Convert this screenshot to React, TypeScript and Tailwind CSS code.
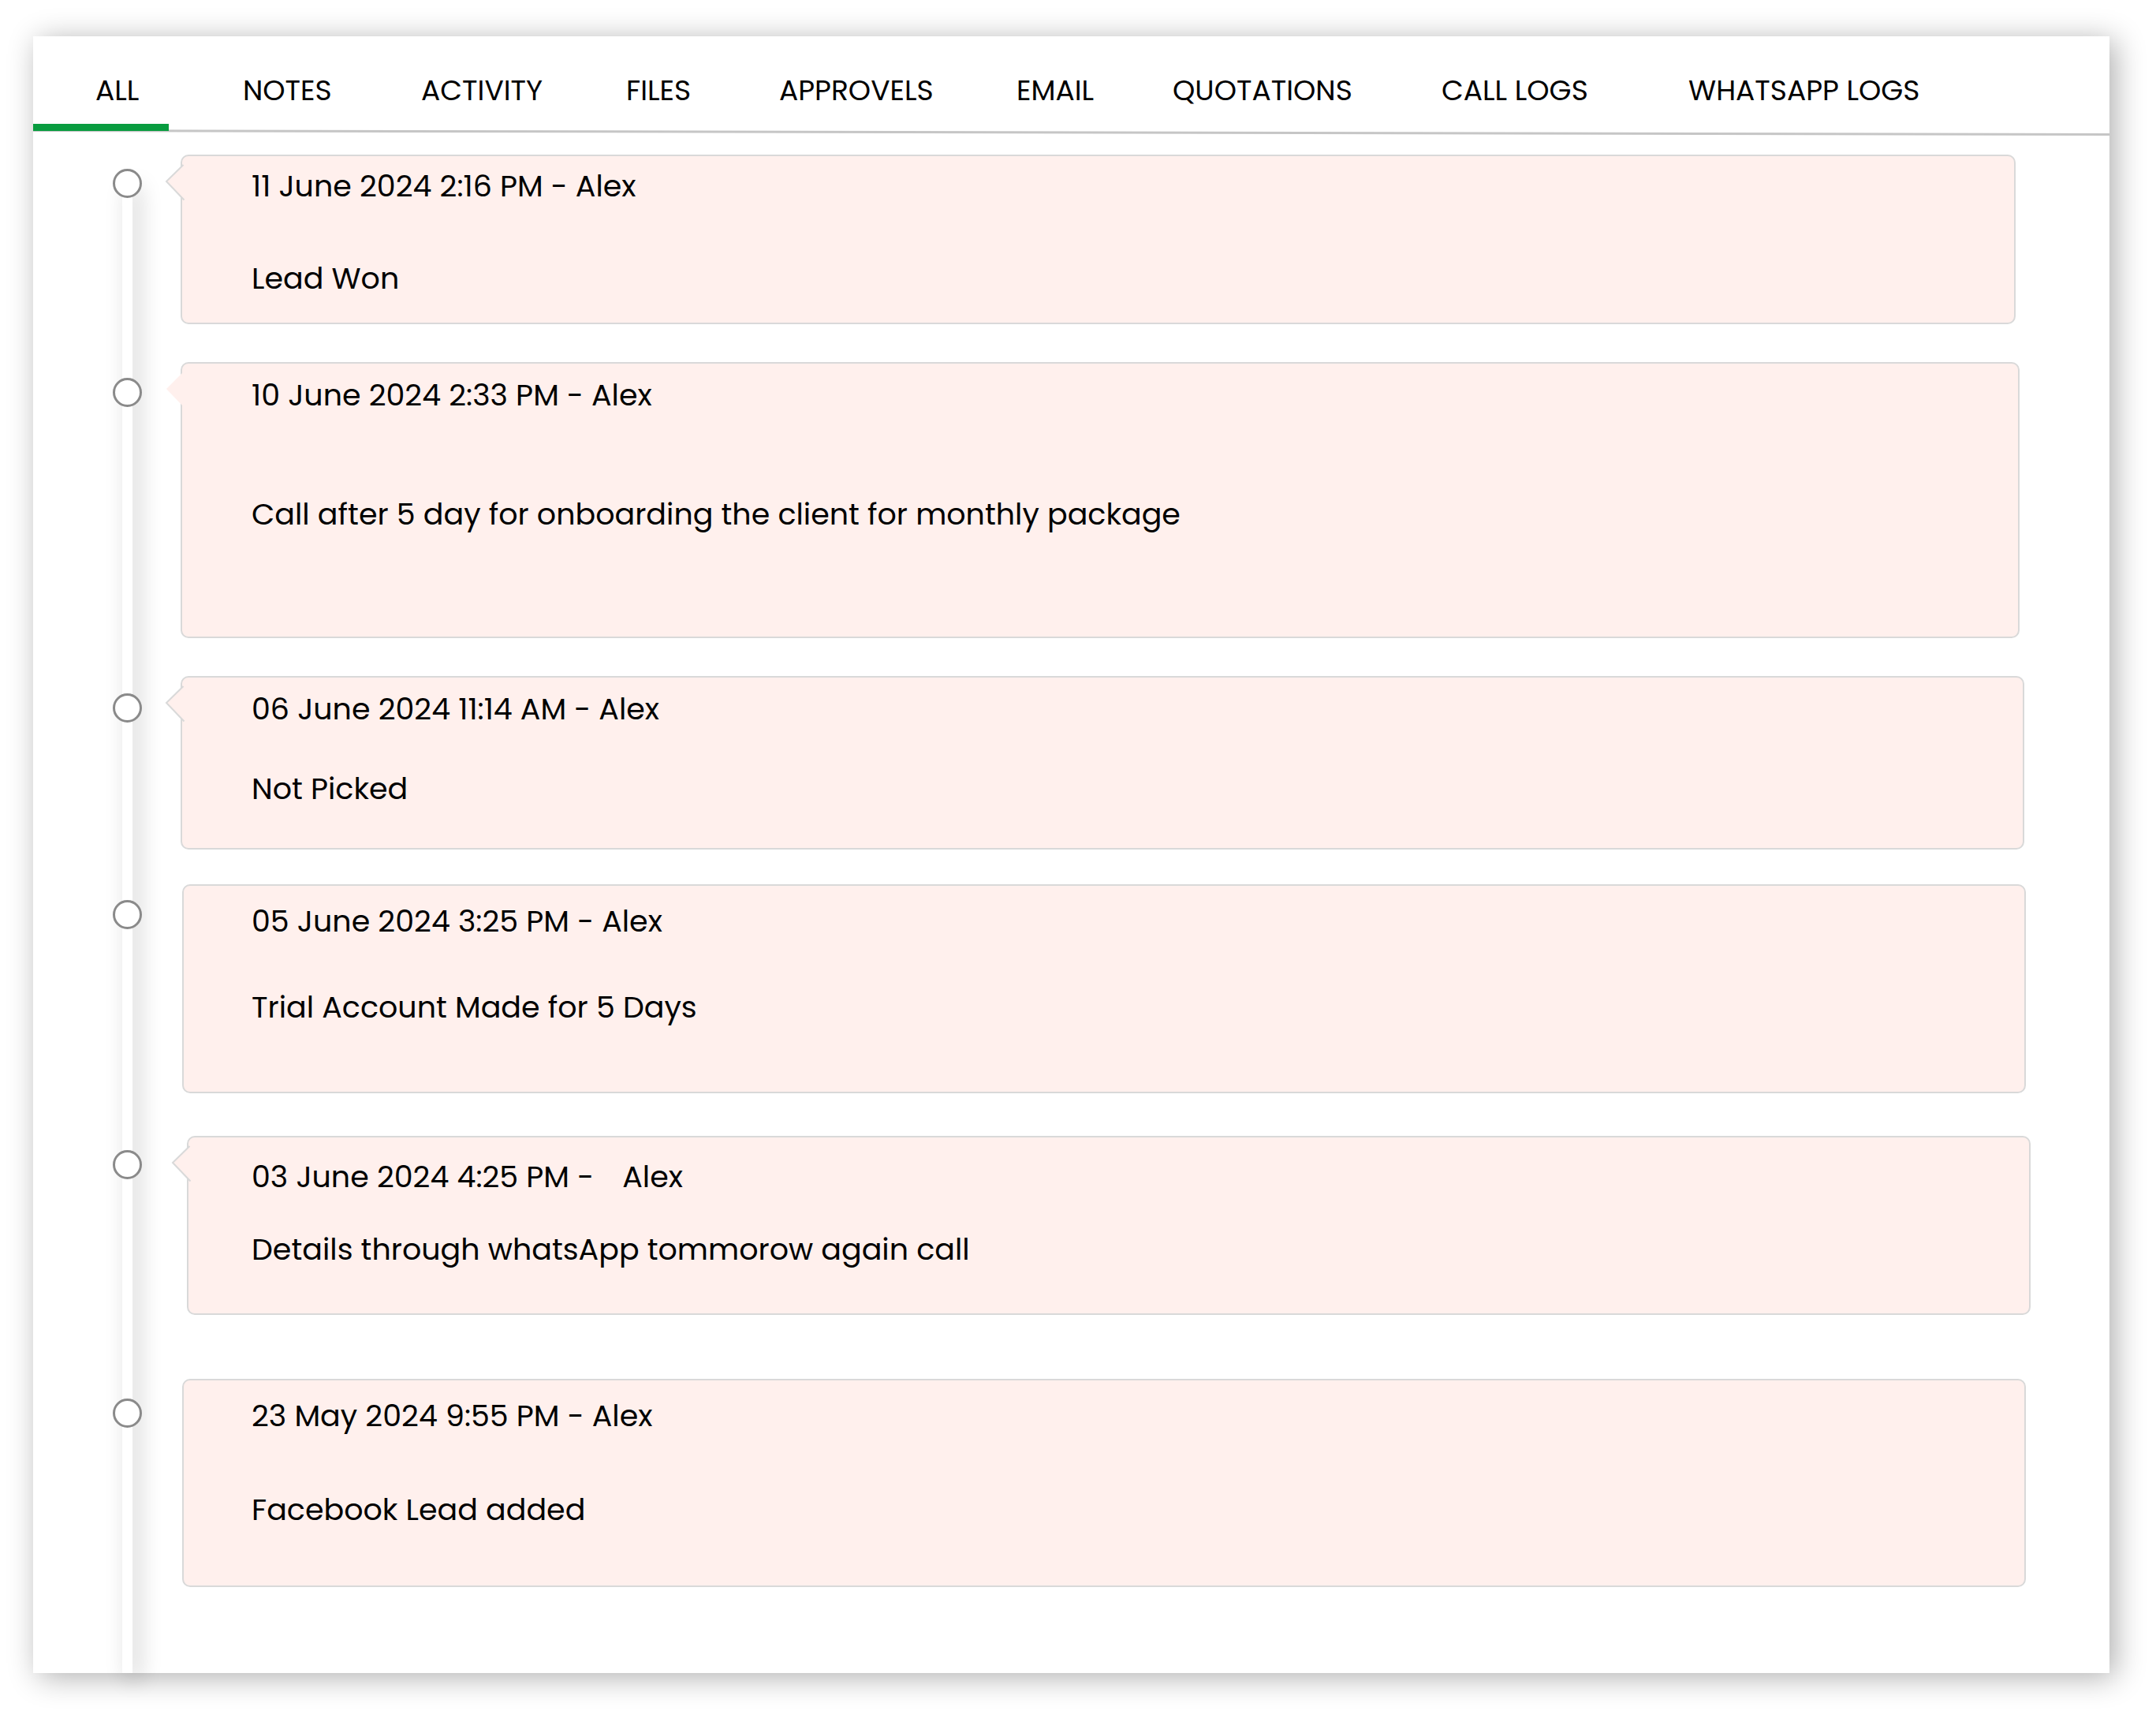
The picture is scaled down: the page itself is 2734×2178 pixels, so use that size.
import { useState } from "react";
import clsx from "clsx";

interface Entry {
  date: string;
  author: string;
  note: string;
  arrow?: "outlined" | "plain";
  authorGap?: string;
  dotClass: string;
  rowClass: string;
  cardClass: string;
}

const TABS = [
  "ALL",
  "NOTES",
  "ACTIVITY",
  "FILES",
  "APPROVELS",
  "EMAIL",
  "QUOTATIONS",
  "CALL LOGS",
  "WHATSAPP LOGS",
];

const ENTRIES: Entry[] = [
  {
    date: "11 June 2024 2:16 PM",
    author: "Alex",
    note: "Lead Won",
    arrow: "outlined",
    dotClass: "top-[18px]",
    rowClass: "mb-12 pr-[119px] pl-[187px]",
    cardClass: "gap-[77px] pt-[18px] pb-9 pl-[88px]",
  },
  {
    date: "10 June 2024 2:33 PM",
    author: "Alex",
    note: "Call after 5 day for onboarding the client for monthly package",
    arrow: "plain",
    dotClass: "top-5",
    rowClass: "mb-12 pr-[114px] pl-[187px]",
    cardClass: "gap-[111px] pt-5 pb-[135px] pl-[88px]",
  },
  {
    date: "06 June 2024 11:14 AM",
    author: "Alex",
    note: "Not Picked",
    arrow: "outlined",
    dotClass: "top-[22px]",
    rowClass: "mb-11 pr-[108px] pl-[187px]",
    cardClass: "gap-[61px] pt-5 pb-[55px] pl-[88px]",
  },
  {
    date: "05 June 2024 3:25 PM",
    author: "Alex",
    note: "Trial Account Made for 5 Days",
    dotClass: "top-5",
    rowClass: "mb-[54px] pr-[106px] pl-[189px]",
    cardClass: "gap-[69px] pt-[25px] pb-[87px] pl-[86px]",
  },
  {
    date: "03 June 2024 4:25 PM",
    author: "Alex",
    note: "Details through whatsApp tommorow again call",
    arrow: "outlined",
    authorGap: "gap-9",
    dotClass: "top-[18px]",
    rowClass: "mb-[81px] pr-[100px] pl-[195px]",
    cardClass: "gap-[52px] pt-[30px] pb-[61px] pl-20",
  },
  {
    date: "23 May 2024 9:55 PM",
    author: "Alex",
    note: "Facebook Lead added",
    dotClass: "top-[25px]",
    rowClass: "pr-[106px] pl-[189px]",
    cardClass: "gap-[79px] pt-[25px] pb-[76px] pl-[86px]",
  },
];

const Arrow = ({ outlined }: { outlined: boolean }) => (
  <svg
    className="absolute top-2.5 -left-[22px] h-12 w-[26px]"
    viewBox="0 0 26 48"
    fill="none"
    aria-hidden="true"
  >
    <path d="M26 1 L23 1 L2 22 L24 45 L26 45 Z" fill="#fff0ed" />
    {outlined && (
      <path d="M23.500 1 L2 22 L24.500 45.500" stroke="#d9d9d9" strokeWidth="2" />
    )}
  </svg>
);

const TimelineEntry = ({ entry }: { entry: Entry }) => (
  <li className={clsx("relative", entry.rowClass)}>
    <span
      className={clsx(
        "absolute left-[101px] size-[37px] rounded-full border-3 border-[#8a8a8a] bg-white",
        entry.dotClass
      )}
    />
    <article
      className={clsx(
        "relative flex flex-col rounded-[10px] border-2 border-[#d9d9d9] bg-[#fff0ed]",
        entry.cardClass
      )}
    >
      {entry.arrow && <Arrow outlined={entry.arrow === "outlined"} />}
      <h2 className={clsx("flex", entry.authorGap ?? "gap-2.5")}>
        <time>{entry.date} -</time>
        <span>{entry.author}</span>
      </h2>
      <p>{entry.note}</p>
    </article>
  </li>
);

export default function App() {
  const [active, setActive] = useState("ALL");

  return (
    <main className="min-h-screen bg-white px-[42px] pt-[46px] pr-[59px] pb-14 font-['Poppins','Inter',sans-serif] text-[38px] leading-10 text-black">
      <section className="bg-white shadow-[7px_5px_36px_rgba(0,0,0,0.32)]">
        <nav className="relative grid h-[126px] grid-cols-[266fr_226fr_260fr_194fr_301fr_198fr_341fr_313fr_534fr] text-[36px]">
          {TABS.map((tab) => (
            <button
              key={tab}
              type="button"
              onClick={() => setActive(tab)}
              className="relative cursor-pointer pt-3 text-left whitespace-nowrap first:pl-[79px]"
            >
              {tab}
              {active === tab && (
                <span className="absolute bottom-1.5 left-0 z-10 h-[9px] w-[172px] bg-[#089c3f]" />
              )}
            </button>
          ))}
          {/* divider drops slightly towards the right edge */}
          <svg
            className="absolute bottom-0 left-0 h-2 w-full"
            viewBox="0 0 100 8"
            preserveAspectRatio="none"
            aria-hidden="true"
          >
            <path d="M0 0 L100 5 L100 8 L0 3 Z" fill="#c6c6c6" />
          </svg>
        </nav>

        <div className="relative pt-6 pb-[109px]">
          <div className="absolute top-14 bottom-0 left-[113px] w-[13px] bg-white shadow-[8px_8px_28px_rgba(0,0,0,0.22)]" />
          <ol>
            {ENTRIES.map((entry) => (
              <TimelineEntry key={entry.date} entry={entry} />
            ))}
          </ol>
        </div>
      </section>
    </main>
  );
}
